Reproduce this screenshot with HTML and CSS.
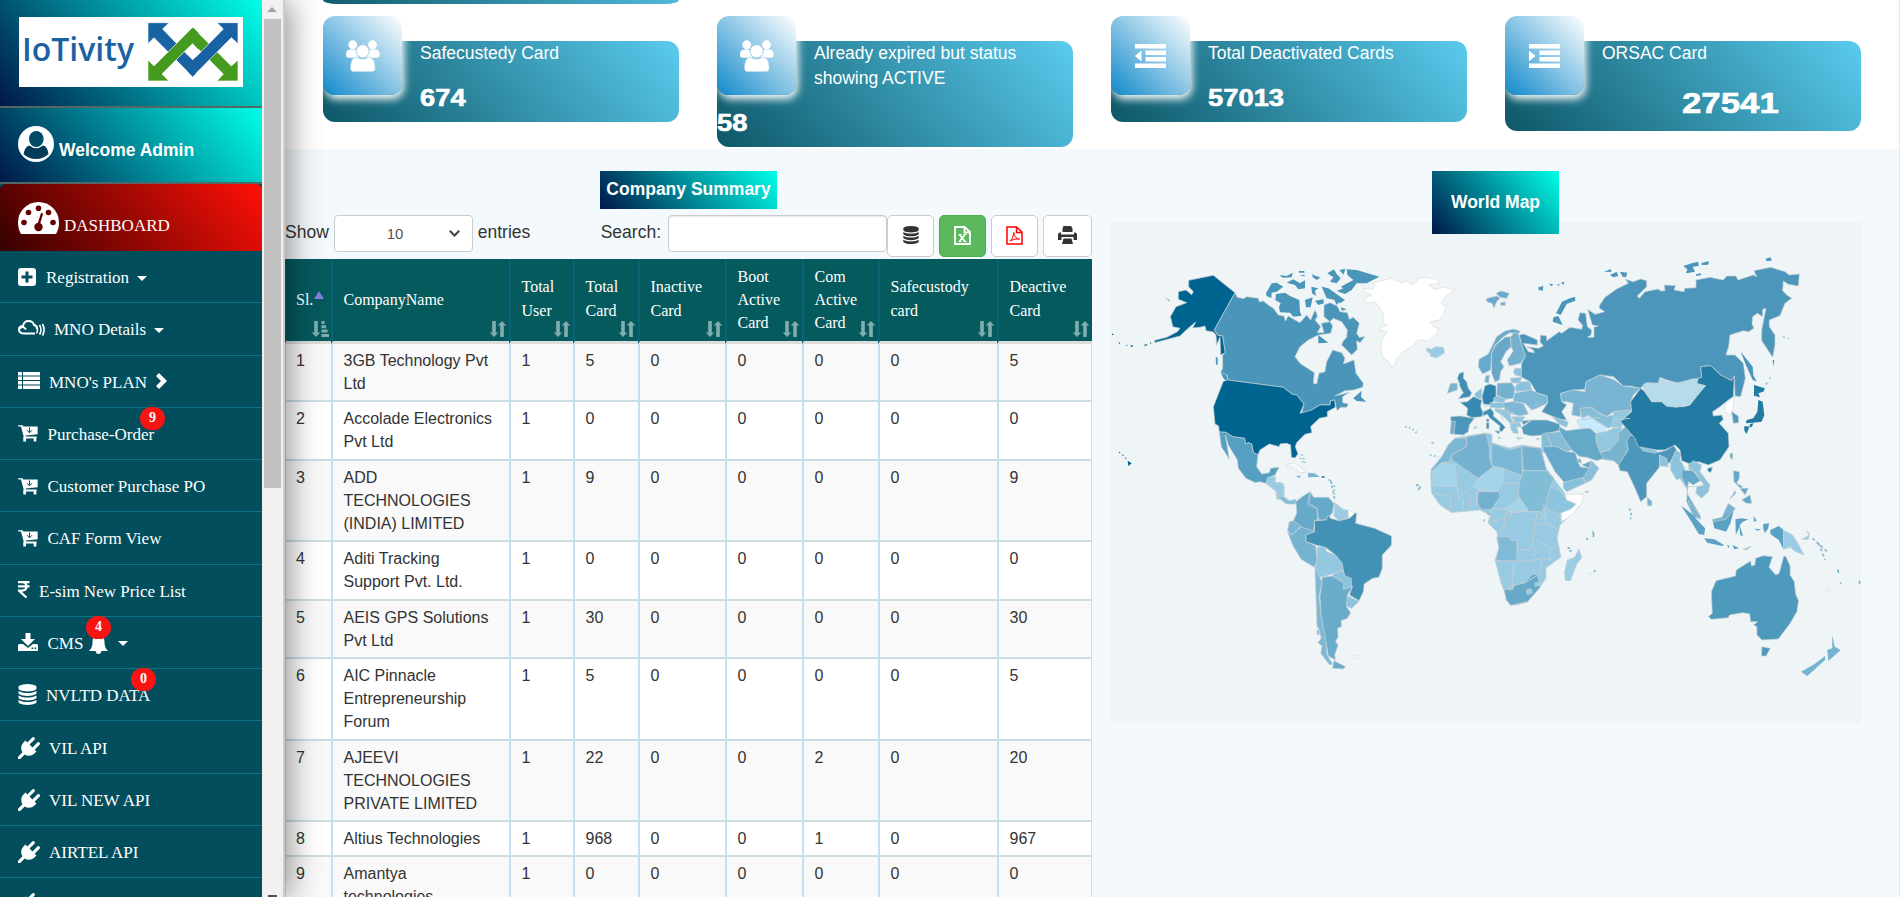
FILE: index.html
```html
<!DOCTYPE html>
<html lang="en">
<head>
<meta charset="utf-8">
<title>IoTivity Dashboard</title>
<link rel="stylesheet" href="styles.css">
</head>
<body>
<svg class="defs" width="0" height="0">
  <defs>
    <symbol id="plug" viewBox="0 0 1792 1792"><path d="M1755 453q37 38 37 90.5t-37 90.5l-401 400 150 150-160 160q-163 163-389.5 186.5t-411.5-100.5l-362 362h-181v-181l362-362q-124-185-100.5-411.5t186.5-389.5l160-160 150 150 400-401q38-37 91-37t90 37 37 90.5-37 90.5l-400 401 234 234 401-400q38-37 91-37t90 37z"/></symbol>
    <symbol id="database" viewBox="128 0 1536 1792"><path d="M896 768q237 0 443-43t325-127v170q0 69-103 128t-280 93.5-385 34.5-385-34.5-280-93.5-103-128v-170q119 84 325 127t443 43zm0 768q237 0 443-43t325-127v170q0 69-103 128t-280 93.5-385 34.5-385-34.5-280-93.5-103-128v-170q119 84 325 127t443 43zm0-384q237 0 443-43t325-127v170q0 69-103 128t-280 93.5-385 34.5-385-34.5-280-93.5-103-128v-170q119 84 325 127t443 43zm0-1152q208 0 385 34.5t280 93.5 103 128v128q0 69-103 128t-280 93.5-385 34.5-385-34.5-280-93.5-103-128v-128q0-69 103-128t280-93.5 385-34.5z"/></symbol>
    <symbol id="cart" viewBox="0 0 60 50"><path d="M0 0h14l2 4h43v23l-36 4v3h33v5h-1v10h-8v-9H24v9h-8v-9h-1l2-6L9 4H1z"/><path d="M34.500 7v14M27 15l7.500 8 7.500-8" fill="none" stroke="#024e5c" stroke-width="3"/></symbol>
    <symbol id="users" viewBox="0 0 100 94"><circle cx="20" cy="14" r="13"/><circle cx="78" cy="14" r="13"/><path d="M14 28h14q0 15 11 24H8q-8-1-8-9 0-15 14-15zM84 28H70q0 15-11 24h32q8-1 8-9 0-15-15-15z"/><circle cx="49" cy="33" r="19" stroke="#a5d2e8" stroke-width="2"/><path stroke="#a5d2e8" stroke-width="2" d="M29 50q20 12 40 0 17 4 17 34 0 9-9 9H22q-9 0-9-9 0-30 16-34z"/></symbol>
    <symbol id="sort" viewBox="0 0 16 16"><path d="M2.200 0h3.600v11.500h2.500L4 16-.2 11.500h2.400zM10.200 16h3.600V4.500h2.500L12 0 7.700 4.500h2.500z"/></symbol>
    <symbol id="sorted" viewBox="0 0 17 16"><path d="M2.200 0h3.600v11.500h2.500L4 16-.2 11.500h2.400zM9.500 0h3v3h-3zM9.500 4.300h4.500v3H9.500zM9.500 8.600h6v3h-6zM9.500 12.900H17V16H9.500z"/></symbol>
  </defs>
</svg>
<div class="page">
  <aside class="sidebar">
    <nav class="menu">
      <div class="brand">
        <svg width="224" height="70" viewBox="0 0 224 70">
          <rect width="224" height="70" fill="#fff"/>
          <text class="brand-name" x="3" y="43.500" textLength="112" lengthAdjust="spacingAndGlyphs">IoTivity</text>
          <g transform="translate(-19 -17) scale(.33333)" stroke="#fff" stroke-width="2">
            <path fill="#1962a3" d="M444 68h63l-19 19 90 94v49L462 113l-18 18z"/>
            <path fill="#449b1e" d="M578 82l116 116 20-18v63h-63l19-21-92-92z"/>
            <path fill="#449b1e" stroke="none" d="M560 100l18-18 18 18v49l-18-19-18 18z"/>
            <path fill="#449b1e" d="M444 243v-63l18 18L578 82v48l-92 92 21 21z"/>
            <path fill="#1962a3" d="M714 68h-63l19 19-92 94v49l116-117 20 18z"/>
            <path fill="#1962a3" stroke="none" d="M562 165l16 16 10-10v48l-10 11-16-17z"/>
            <path fill="#449b1e" stroke="none" d="M568 94l10-10 10 10v44l-10-9-10 9z"/>
          </g>
        </svg>
      </div>
      <div class="welcome">
        <svg width="36" height="36" viewBox="0 0 36 36"><circle cx="18" cy="18" r="18" fill="#fff"/><ellipse cx="18.300" cy="13" rx="7.300" ry="8" fill="#034a66"/><path d="M5.500 28Q7 20 11.500 19.500q6.500 5.500 13.500 0 4.500.5 5.500 8.500Q25.500 33 18 33T5.500 28z" fill="#033c5b"/></svg>
        <span>Welcome Admin</span>
      </div>
      <div class="dash">
        <svg width="41" height="33" viewBox="0 0 41 33"><path fill="#fff" d="M3 32Q0 27 0 20.500 0 12 6 6T20.500 0 35 6t6 14.500Q41 27 38 32z"/><g fill="#640000"><circle cx="6" cy="20.500" r="2.800"/><circle cx="10.500" cy="10.500" r="2.800"/><circle cx="20.500" cy="6.200" r="2.800"/><circle cx="30.500" cy="10.500" r="2.800"/><circle cx="35" cy="20.500" r="2.800"/><circle cx="20.500" cy="25" r="4.200"/><path d="M23 11l2.200.6-3.300 11-2.300-.6z"/></g></svg>
        <span>DASHBOARD</span>
      </div>
      <div class="item"><i class="ic w28"><svg width="18" height="18" viewBox="0 0 18 18"><path fill-rule="evenodd" d="M3 0h12q3 0 3 3v12q0 3-3 3H3q-3 0-3-3V3q0-3 3-3zM7.500 3.500v4h-4v3h4v4h3v-4h4v-3h-4v-4z"/></svg></i>Registration<b class="caret"></b></div>
      <div class="item"><i class="ic w36 up3"><svg width="27" height="16" viewBox="0 0 27 16"><g fill="none" stroke="#fff" stroke-width="2"><path d="M17 13.500H5.500Q1 13 1 9.500T5 6Q6 1 10.500 1T16 5q3 .5 3 4"/><path d="M1 9q4-4 7 .5" /><path d="M18.500 6.500q2 3 0 7M21.500 5q3 5 0 9.500M24.500 4q3.200 6 0 11.500" stroke-width="1.600"/></g></svg></i>MNO Details<b class="caret"></b></div>
      <div class="item"><i class="ic w31 up3"><svg width="22" height="17" viewBox="0 0 22 17"><path d="M0 0h4v3.400H0zM5 0h17v3.400H5zM0 4.500h4v3.400H0zM5 4.500h17v3.400H5zM0 9h4v3.400H0zM5 9h17v3.400H5zM0 13.500h4V17H0zM5 13.500h17V17H5z"/></svg></i>MNO's PLAN<svg class="chev" width="11" height="16" viewBox="0 0 11 16"><path d="M3 0l8 8-8 8-3-3 5-5-5-5z"/></svg></div>
      <div class="item"><i class="ic w30"><svg width="20" height="17"><use href="#cart"/></svg></i>Purchase-Order<em class="badge at140">9</em></div>
      <div class="item"><i class="ic w30"><svg width="20" height="17"><use href="#cart"/></svg></i>Customer Purchase PO</div>
      <div class="item"><i class="ic w30"><svg width="20" height="17"><use href="#cart"/></svg></i>CAF Form View</div>
      <div class="item"><i class="ic w21 up3"><svg width="12" height="17" viewBox="0 0 12 17"><path d="M0 1.200h11.500M0 5.400h11.500M0 1.200h4q4.500.3 4.500 4.200T4 9.600H1l7.500 7" fill="none" stroke="#fff" stroke-width="2.200"/></svg></i>E-sim New Price List</div>
      <div class="item"><i class="ic w30 up3"><svg width="20" height="18" viewBox="0 0 20 18"><path fill-rule="evenodd" d="M7.500 0h5v6H17l-7 7-7-7h4.500zM0 12.500q0-1.500 1.500-1.500H5l5 4 5-4h3.500q1.500 0 1.500 1.500V18H0zM13.500 14.500v1.600h1.600v-1.600zM16.500 14.500v1.600h1.600v-1.600z"/></svg></i>CMS<svg class="bell" width="19" height="20" viewBox="0 0 19 20"><path d="M9.500 0q6 1 6 8 0 6 3.500 9H0q3.500-3 3.500-9 0-7 6-8zM6.500 17h6q-.5 3-3 3t-3-3z"/></svg><b class="caret"></b><em class="badge at86">4</em></div>
      <div class="item"><i class="ic w28 up3"><svg width="19" height="21"><use href="#database"/></svg></i>NVLTD DATA<em class="badge at131">0</em></div>
      <div class="item"><i class="ic w31"><svg width="22" height="22"><use href="#plug"/></svg></i>VIL API</div>
      <div class="item"><i class="ic w31"><svg width="22" height="22"><use href="#plug"/></svg></i>VIL NEW API</div>
      <div class="item"><i class="ic w31"><svg width="22" height="22"><use href="#plug"/></svg></i>AIRTEL API</div>
      <div class="item"><i class="ic w31"><svg width="22" height="22"><use href="#plug"/></svg></i></div>
    </nav>
    <div class="scroll"><span class="up"></span><span class="thumb"></span><span class="down"></span></div>
  </aside>

  <main class="main">
    <section class="cards">
      <div class="stub"></div>
      <div class="cardrow">
        <article class="card"><div class="tile"><svg width="34" height="32"><use href="#users"/></svg></div><p class="ttl">Safecustedy Card</p><p class="num">674</p></article>
        <article class="card"><div class="tile"><svg width="34" height="32"><use href="#users"/></svg></div><p class="ttl">Already expired but status showing ACTIVE</p><p class="num flush">58</p></article>
        <article class="card"><div class="tile"><svg width="31" height="24" viewBox="0 0 31 24"><path d="M0 0h31v4.500H0zM10.500 6.500H31V11H10.500zM10.500 13H31v4.500H10.500zM0 19.500h31V24H0zM6.500 6.500v11L0 12z"/></svg></div><p class="ttl">Total Deactivated Cards</p><p class="num">57013</p></article>
        <article class="card"><div class="tile"><svg width="31" height="24" viewBox="0 0 31 24"><path d="M0 0h31v4.500H0zM10.500 6.500H31V11H10.500zM10.500 13H31v4.500H10.500zM0 19.500h31V24H0zM0 6.500v11L6.500 12z"/></svg></div><p class="ttl">ORSAC Card</p><p class="num big">27541</p></article>
      </div>
    </section>

    <section class="lower">
      <div class="left">
        <h3 class="label">Company Summary</h3>
        <div class="controls">
          <span>Show</span>
          <div class="select">10<svg width="11" height="7" viewBox="0 0 11 7"><path d="M.8.800l4.700 4.700L10.200.800" fill="none" stroke="#444" stroke-width="2"/></svg></div>
          <span>entries</span>
          <span class="search">Search:</span>
          <div class="input"></div>
          <div class="btns">
            <button><svg width="16" height="18"><use href="#database"/></svg></button>
            <button class="green"><svg width="17" height="19" viewBox="0 0 17 19"><path d="M1 1h9.500L16 6v12H1zM10.500 1v5.500H16" fill="none" stroke="#fff" stroke-width="1.800"/><path d="M5.500 8.500l5.500 7M11 8.500l-5.500 7" fill="none" stroke="#fff" stroke-width="1.700"/><path d="M4.500 8.500h3M9.500 8.500h3M4.500 15.500h3M9.500 15.500h3" fill="none" stroke="#fff" stroke-width="1.200"/></svg></button>
            <button><svg width="17" height="19" viewBox="0 0 17 19"><path d="M1 1h9.500L16 6v12H1zM10.500 1v5.500H16" fill="none" stroke="red" stroke-width="1.500"/><path d="M3.500 15.500q4-2.500 4.300-9 .8 6 5.700 6.500-5-.5-8.500 1.500" fill="none" stroke="red"/></svg></button>
            <button class="wide"><svg width="19" height="18" viewBox="0 0 19 18"><path d="M5.500 0H13l1.500 2.500V6h-10V2.500zM1.500 6.500H3v2h13v-2h1.500L19 8v6h-3.500v-3h-12v3H0V8zM5.500 12.500h8L15 18H4z"/></svg></button>
          </div>
        </div>
        <table>
          <colgroup><col class="c1"><col class="c2"><col class="c3"><col class="c4"><col class="c5"><col class="c6"><col class="c7"><col class="c8"><col class="c9"></colgroup>
          <thead><tr>
            <th>Sl.<b class="tri"></b><svg class="s1" width="17" height="16"><use href="#sorted"/></svg></th>
            <th>CompanyName<svg width="16" height="16"><use href="#sort"/></svg></th>
            <th class="two">Total<br>User<svg width="16" height="16"><use href="#sort"/></svg></th>
            <th class="two">Total<br>Card<svg width="16" height="16"><use href="#sort"/></svg></th>
            <th class="two">Inactive<br>Card<svg width="16" height="16"><use href="#sort"/></svg></th>
            <th>Boot<br>Active<br>Card<svg width="16" height="16"><use href="#sort"/></svg></th>
            <th>Com<br>Active<br>Card<svg width="16" height="16"><use href="#sort"/></svg></th>
            <th class="two">Safecustody<br>card<svg width="16" height="16"><use href="#sort"/></svg></th>
            <th class="two">Deactive<br>Card<svg width="16" height="16"><use href="#sort"/></svg></th>
          </tr></thead>
          <tbody>
            <tr class="h58"><td>1</td><td>3GB Technology Pvt Ltd</td><td>1</td><td>5</td><td>0</td><td>0</td><td>0</td><td>0</td><td>5</td></tr>
            <tr class="h59"><td>2</td><td>Accolade Electronics Pvt Ltd</td><td>1</td><td>0</td><td>0</td><td>0</td><td>0</td><td>0</td><td>0</td></tr>
            <tr class="h81"><td>3</td><td>ADD TECHNOLOGIES (INDIA) LIMITED</td><td>1</td><td>9</td><td>0</td><td>0</td><td>0</td><td>0</td><td>9</td></tr>
            <tr class="h59"><td>4</td><td>Aditi Tracking Support Pvt. Ltd.</td><td>1</td><td>0</td><td>0</td><td>0</td><td>0</td><td>0</td><td>0</td></tr>
            <tr class="h58"><td>5</td><td>AEIS GPS Solutions Pvt Ltd</td><td>1</td><td>30</td><td>0</td><td>0</td><td>0</td><td>0</td><td>30</td></tr>
            <tr class="h82"><td>6</td><td>AIC Pinnacle Entrepreneurship Forum</td><td>1</td><td>5</td><td>0</td><td>0</td><td>0</td><td>0</td><td>5</td></tr>
            <tr class="h81"><td>7</td><td>AJEEVI TECHNOLOGIES PRIVATE LIMITED</td><td>1</td><td>22</td><td>0</td><td>0</td><td>2</td><td>0</td><td>20</td></tr>
            <tr class="h35"><td>8</td><td>Altius Technologies</td><td>1</td><td>968</td><td>0</td><td>0</td><td>1</td><td>0</td><td>967</td></tr>
            <tr class="h58"><td>9</td><td>Amantya technologies</td><td>1</td><td>0</td><td>0</td><td>0</td><td>0</td><td>0</td><td>0</td></tr>
          </tbody>
        </table>
      </div>

      <div class="right">
        <h3 class="label tall">World Map</h3>
        <svg class="map" width="750" height="501" viewBox="1111 222 750 501">
          <!-- North America and Greenland -->
          <g transform="translate(1100 220) scale(.33333)" fill="#4a96ba">
            <path fill="#006491" d="M266 181L340 166 405 218 343 330 354 346 368 347 376 398 362 405 360 350 350 375 348 345 340 336 318 332 315 318 300 322 278 324 287 306 270 320 250 338 240 348 164 368 164 361 200 352 232 335 240 325 218 320 215 305 211 290 228 260 260 248 235 238 235 215 258 210 275 224 280 215 266 200zM197 233l11 7 1 5z"/>
            <path class="isle" fill="#006491" d="M36 341h4v4h-4zM55 366l6 4-3 3zM77 374l6 2-2 3zM92 376h6v4h-6zM134 373l10 1-10 5zM150 367l5 2-4 3zM56 694l6 5-4 1zM66 702l6 5-4 1zM74 711l6 5-4 1zM83 722l12 8-10 8z"/>
            <path d="M405 218L412 232 430 236 440 230 475 235 478 246 490 243 505 255 520 265 535 285 552 288 556 303 565 288 585 300 600 308 620 285 632 300 645 270 650 280 652 290 645 300 662 320 652 338 672 338 664 310 690 305 698 318 692 340 655 345 625 360 600 380 585 410 600 430 643 458 640 490 650 492 657 460 675 455 680 425 698 390 725 398 735 415 730 432 762 420 768 460 790 490 788 502 760 510 735 512 705 528 748 517 728 530 728 548 745 552 740 562 722 562 712 572 708 560 704 540 692 542 690 555 660 555 635 570 605 580 612 552 590 525 575 522 550 502 383 480 382 466 362 456 368 445 368 405 376 398 368 347 354 346 343 330z"/>
            <path d="M672 255L690 248 712 258 720 275 742 278 748 298 760 292 778 310 770 340 778 352 795 350 780 368 770 362 772 388 755 405 725 375 728 365 740 352 742 330 725 305 700 295 690 305 672 290z"/>
            <path class="isle" d="M528 222L555 218 570 228 598 240 600 275 605 287 580 290 570 278 540 277 537 262 542 250 526 240zM498 220L515 190 530 188 550 200 530 215 515 218 514 234 500 228zM740 148L770 150 838 170 800 190 770 190 755 210 735 222 710 213 730 205 722 200 742 190 760 180 742 165zM538 165L560 168 578 158 575 172 548 173zM560 188L580 178 600 190 615 180 615 205 595 208 585 195zM597 153h16v5h-16zM598 167l15-3 1 5zM637 162l10 6 14 4-10 8-13-8zM682 160L702 148 710 162 722 175 710 190 690 185 700 172zM718 150l18-4-5 18zM665 200L685 205 700 215 735 240 720 250 705 240 680 235zM615 240L638 232 632 262 618 262zM645 242L670 238 672 250 655 255zM634 200L655 205 645 212 648 228 636 220zM655 345L685 368 655 370zM760 535L785 512 783 530 798 545 770 543zM362 456L380 466 383 485 370 475zM347 412h6v22h-5zM722 262l18 6-14 4zM700 235l20 8-10 12z"/>
            <path fill="#006491" d="M370 484L383 480 550 502 575 522 590 525 612 552 600 580 635 570 660 555 690 555 692 542 704 540 706 562 682 575 682 590 658 595 632 620 636 638 615 643 590 668 586 680 594 702 585 714 574 712 572 675 560 670 540 672 538 680 508 672 480 690 474 704 460 698 455 672 445 668 436 672 434 655 398 650 378 637 358 636 356 618 345 612 340 560z"/>
            <path fill="#559fc2" d="M358 636L378 637 398 650 434 655 436 672 445 668 455 672 460 698 474 704 470 740 485 762 508 758 512 745 537 742 525 765 508 772 498 790 478 785 466 788 438 775 415 745 412 720 385 675 376 645 388 718 364 680z"/>
            <path fill="#9acbe4" d="M508 772L522 770 520 788 545 788 553 800 550 838 530 838 528 815 498 790zM980 384L995 388 1005 380 1030 382 1034 398 1010 414 990 408 992 400 980 395z"/>
            <path class="blank" d="M845 183L870 175 905 188 920 182 935 195 952 185 948 178 975 172 1010 178 1018 190 985 195 1005 208 1030 202 1065 208 1032 235 1024 250 1038 262 1030 285 1018 300 990 305 1000 320 1015 325 1012 340 985 362 955 360 935 380 910 395 890 415 882 440 872 440 868 425 850 415 842 385 845 360 862 335 840 330 842 322 862 315 850 310 850 280 828 248 800 248 792 235 815 225 792 215 792 205 818 208 825 195 818 188z"/>
            <path class="blank" d="M556 738L575 730 600 742 620 758 600 758 575 742z"/>
            <path class="isle" fill="#7fb9d7" d="M590 769h12l-4 5zM624 758L640 760 655 770 625 772z"/>
            <path class="isle" fill="#006491" d="M665 769h9v4h-9z"/>
            <g class="dots" fill="none" stroke-dasharray="1.500 2.500"><path d="M686 778L704 800 702 835M605 703L620 736M600 714L612 730M915 620L935 625 952 640M948 795L962 805M990 705L1015 710"/></g>
          </g>
          <!-- Europe and Asia -->
          <g transform="translate(1400 220) scale(.33333)" fill="#4b96ba">
            <path d="M358 345L372 342 412 360 412 375 370 370 385 395 403 398 400 390 380 380 415 385 430 378 420 365 422 345 440 348 440 362 478 335 485 340 510 322 545 328 548 316 534 300 540 278 557 280 562 320 575 330 573 345 563 352 582 352 582 322 595 318 577 315 563 268 585 283 614 275 598 265 598 257 615 232 650 207 685 190 676 178 700 185 722 177 740 182 740 200 712 228 718 235 735 215 775 207 782 213 795 212 793 195 827 197 822 210 852 215 854 205 888 203 888 180 930 172 970 180 980 168 1008 168 1014 180 1060 165 1070 170 1062 152 1112 142 1155 155 1168 165 1198 162 1195 198 1165 193 1150 183 1148 212 1160 225 1175 235 1155 250 1140 287 1108 300 1108 320 1125 345 1125 375 1118 412 1085 362 1085 330 1098 265 1088 268 1088 290 1072 280 1058 290 1056 312 1062 325 1045 335 1030 332 990 345 986 380 978 405 1005 405 1030 430 1036 475 1022 530 1005 528 1003 468 995 482 962 465 932 437 902 440 905 472 860 485 835 490 800 480 780 472 775 490 735 490 722 505 690 498 670 498 640 470 600 465 558 485 555 508 520 510 482 520 485 545 500 555 485 575 500 600 480 598 455 588 425 575 442 550 442 528 410 518 390 485 362 470 365 430 376 408 365 375z"/>
            <path class="isle" d="M525 230L526 242 500 252 482 285 468 280 486 245 510 235zM460 292L475 288 488 315 458 305zM1022 395L1058 440 1060 465 1070 485 1058 480 1040 440zM415 202L430 198 428 212 416 210zM447 191l13 2-6 6zM470 194l10-1-4 5zM483 188l10-3-2 10zM612 156L632 147 635 155zM630 165L650 155 655 168 640 172zM660 155L682 158 678 172 668 170zM850 138L875 130 895 125 896 138 878 140 885 155 858 160 862 148zM905 128L927 124 925 134 905 135zM888 163l14-3 2 5-15 3zM1097 116L1112 112 1115 122 1100 124zM1118 420h5l-3 20zM1148 349l8 2-4 3zM1162 353l6 2-3 2zM1096 492l7-6-3 8zM1107 476l6-5-3 7z"/>
            <path fill="#68aacb" d="M258 236L290 228 300 235 290 245 282 264 276 250 262 246zM288 220L302 213 328 220 320 235 300 232zM300 250L315 245 316 256 303 256zM315 333L340 327 360 333 355 342 330 338 310 350 285 375 275 400 272 450 248 462 235 440 237 418 265 402 290 350z"/>
            <path fill="#67a8c9" d="M315 352L332 350 333 380 318 395 302 425 312 440 302 455 298 480 285 486 275 460 275 400 287 375z"/>
            <path fill="#75b1cf" d="M332 350L345 336 355 342 376 408 362 430 328 438 322 420 340 392 333 380z"/>
            <path fill="#418eb4" d="M178 460L192 456 190 475 200 485 205 505 215 518 210 530 175 536 190 518 180 500 178 490 172 475z"/>
            <path fill="#78b3d0" d="M152 490L172 490 172 510 142 520 148 500z"/>
            <path fill="#3689b0" d="M180 547L202 545 220 530 245 540 242 560 250 580 245 590 215 593 200 585 203 565z"/>
            <path fill="#4b96ba" d="M152 590L180 588 223 595 208 615 205 635 190 645 163 643 153 605z"/>
            <path fill="#6eafcd" d="M154 604L166 604 162 643 150 641z"/>
            <path fill="#2f84ad" d="M255 497L270 492 288 498 288 535 270 555 250 552 246 530z"/>
            <path fill="#3f8fb5" d="M250 575L272 565 282 578 280 588 305 610 316 622 305 635 298 632 300 618 270 595 262 583 248 588zM284 632L300 634 296 642zM259 597h8v8h-7zM259 608h8v18h-8z"/>
            <path fill="#73b1ce" d="M292 490L335 488 345 505 340 535 318 538 290 525zM258 467L268 465 266 490 253 485z"/>
            <path fill="#8bc3de" d="M225 520L245 505 246 530 240 540 225 530zM280 535L292 528 318 538 310 548 285 545zM270 548L310 548 325 560 300 565 270 562zM345 445L362 445 365 470 345 465 340 455zM330 475L365 472 358 490 335 488zM345 500L358 485 390 485 395 510 348 515z"/>
            <path fill="#7db8d5" d="M342 520L395 510 412 520 442 528 442 550 410 565 395 570 375 550 340 545zM310 548L340 545 370 550 385 582 360 588 330 580 315 570z"/>
            <path fill="#92c7df" d="M285 565L315 570 330 580 335 600 345 610 330 610 312 590 285 572zM335 590L375 590 365 605 345 610zM330 610L360 608 365 622 350 620 355 640 340 640 332 625zM350 652l18 3-15 3zM295 652h6v4h-6zM408 655h12l-8 5zM222 620h7v5h-7zM95 666h6v5h-6z"/>
            <path d="M365 622L380 612 395 600 440 600 478 612 483 630 430 645 395 648 370 642zM365 603L395 600 370 615z" fill="#559dbf"/>
            <path fill="#79b5d3" d="M482 520L520 510 555 515 558 485 600 465 640 478 670 498 722 505 700 525 692 545 695 570 640 575 620 590 600 580 575 562 545 565 540 590 515 585 520 550 500 545 485 545z"/>
            <path fill="#87bfda" d="M540 565L575 562 600 582 620 590 635 585 660 600 625 625 570 590 545 595zM455 588L480 598 505 605 500 622 478 612z"/>
            <path fill="#c8ecff" d="M530 602L565 586 590 605 620 622 605 640 570 625 542 625z"/>
            <path fill="#93c8e1" d="M640 575L695 570 670 600 665 622 630 622 640 600zM588 640L620 634 640 625 665 622 655 660 630 690 600 697 588 665z"/>
            <path fill="#78b3d0" d="M600 697L630 690 655 660 655 640 675 620 692 630 695 645 680 665 685 690 655 735 640 722 605 718z"/>
            <path fill="#65a9c9" d="M478 620L500 632 530 628 570 625 588 640 588 665 600 697 612 715 590 722 560 712 540 710 515 690 490 655 480 640z"/>
            <path fill="#84bdd8" d="M430 640L480 635 490 655 515 690 500 695 470 680 440 700 425 695 425 650z"/>
            <path fill="#66a9ca" d="M430 680L470 680 500 695 525 697 540 740 568 745 560 770 545 775 495 790 465 755 430 690zM535 718L540 715 545 730 535 725zM545 735L575 722 568 745z"/>
            <path fill="#88c0da" d="M568 745L575 722 597 745 575 780 555 790 550 772zM490 787L550 772 555 790 500 815 490 805zM553 815l15-2-6 6zM742 835L755 845 755 858 743 857z"/>
            <path fill="#4c97bb" d="M655 735L685 690 680 665 690 645 708 650 715 675 735 690 775 697 800 690 820 675 830 690 810 728 795 735 780 705 778 742 740 790 740 830 722 845 705 805 682 755 660 752z"/>
            <path fill="#8cc4de" d="M720 680L745 683 775 695 765 700 728 692zM778 705L800 715 805 740 780 738zM812 728L828 690 842 700 840 720 855 745 845 765 855 800 840 775 830 780 812 750z"/>
            <path fill="#237ba3" d="M722 505L732 512 755 545 785 545 800 558 850 560 870 555 915 497 890 490 895 475 905 472 902 440 932 437 962 465 995 482 1003 468 1000 530 985 540 975 548 960 560 938 575 940 588 965 585 970 598 958 610 985 640 987 680 960 720 925 735 895 725 870 732 845 722 840 690 825 675 795 690 770 690 715 680 705 655 662 605 695 575 692 545zM923 745L938 742 932 758 923 752z"/>
            <path fill="#b6dbed" d="M728 500L740 488 775 490 780 472 800 485 835 488 880 476 893 478 890 492 917 497 870 552 830 562 800 558 785 545 755 545z"/>
            <path class="blank" d="M975 552L1002 530 1000 560 992 585 978 578z"/>
            <path fill="#509abd" d="M995 575L1015 588 1016 608 1000 610z"/>
            <path class="isle" fill="#237ba3" d="M1062 495L1095 505 1090 515 1075 520 1080 532 1062 527zM1075 540L1088 545 1093 585 1085 605 1060 608 1038 610 1040 600 1060 595 1072 575zM1033 618L1048 620 1040 642 1033 632zM1050 612l10-2-4 10-8 2z"/>
            <path fill="#63a8c9" d="M845 750L880 752 905 780 880 795 865 785 862 820 870 835 900 885 902 898 880 890 860 845 862 810 845 770zM1000 752L1018 755 1018 775 1010 790 1028 800 1022 805 1002 785zM1005 812L1008 818 990 838zM1020 805h25l-10 20zM1025 840L1050 825 1055 850 1040 850zM990 700h8v20l-8-8z"/>
            <path fill="#8dc4dd" d="M865 735L880 722 905 735 900 755 930 795 925 815 905 835 888 820 890 800 912 795 885 755 868 750z"/>
            <g fill="none"><path d="M870 740L885 760 912 795M545 600L600 592M640 600L690 595M320 565L340 580 345 610M300 575L310 600M370 550L380 570M405 555h10M442 645L455 680M640 620L650 605M250 560L265 555M860 800L890 800"/></g>
          </g>
          <!-- Africa -->
          <path fill="#98cbe3" d="M1455 438L1467 436 1486 433 1492 435 1492 443 1510 448 1522 445 1541 448 1546 468 1560 487 1566 495 1583 494 1579 507 1560 525 1557 538 1561 557 1546 568 1546 578 1540 587 1527.500 602 1516 605 1510.500 605 1506 600 1506 595 1501 583 1495 560 1499 548 1497 532 1488 523 1490 515 1480 510 1469 511 1451.500 512.500 1440 505 1431.500 493 1430.700 472 1442 457 1448 445z"/>
          <g transform="translate(1400 220) scale(.33333)">
            <path fill="#7cb8d5" d="M165 655L200 655 200 680 155 705 150 725 125 728 95 755 92 750 125 710 145 675zM275 668L330 690 365 680 368 768 310 745 275 738z"/>
            <path fill="#74b1d0" d="M200 650L258 640 268 670 268 715 278 742 235 775 155 720 155 705 200 680zM365 678L422 685 440 752 370 752zM235 815L298 815 300 830 275 868 245 870 232 850z"/>
            <path fill="#8ec6df" d="M258 640L275 643 275 675 268 680z"/>
            <path fill="#82bdd8" d="M370 752L440 752 462 775 452 800 440 850 420 880 380 872 355 825 358 790z"/>
            <path fill="#8dc5de" d="M452 800L480 812 495 832 530 855 510 872 480 885 440 865 440 835z"/>
            <path fill="#a4d4ea" d="M95 755L125 728 165 735 172 800 100 800zM235 775L280 740 312 748 310 790 290 815 235 812 220 800zM310 868L340 850 355 830 385 870 345 878z"/>
            <path class="blank" d="M495 822L550 823 545 850 515 885 485 905 482 880 512 868 530 852 500 840z"/>
            <g fill="none"><path d="M172 800L175 835 220 800M100 820L150 828 152 875M190 835V868M210 825L212 865M230 815V855M270 900L275 865 310 868M330 900L335 875 420 875 440 900M310 790L355 790M440 880L420 900"/></g>
          </g>
          <g transform="translate(1200 460) scale(.42092 .33333)">
            <path fill="#7fbbd7" d="M705 230L735 230 738 240 753 242 753 305 702 303 710 265z"/>
            <path fill="#67a9c9" d="M722 388L742 390 748 375 772 368 790 342 802 345 808 382 778 425 738 436 728 420z"/>
            <path fill="#9acce3" d="M900 267L907 293 895 312 880 362 868 362 866 335 873 300 890 292zM775 390L786 386 790 398 778 405zM796 368h10v10h-10z"/>
            <g fill="none"><path d="M700 302L760 303 778 305 812 295M745 310L742 390M745 345L750 312M772 368L745 375M772 368L810 340 810 300M753 242L755 268 785 270 795 215 795 190 803 155M820 160L822 190 800 195M822 190L852 210M800 240L830 265 855 262M830 265L832 300 812 295M790 250L800 280 785 285M705 220L722 200 725 160 760 155 803 155M685 190L718 175M820 155L815 130M860 155L855 190"/></g>
            <path class="isle" fill="#7ab6d3" d="M873 262h6v5h-6zM878 270h5v5h-5zM932 210l5 10v12h-4zM917 234h5v5h-5zM935 330h6l-4 9zM672 180l5-3-2 8zM683 158h5v6h-5z"/>
            <path class="dots" fill="none" d="M1021 145v8M1024 158v8M1023 172v6M514 73l6 5M524 80l-6 10"/>
          </g>
          <!-- South America, Oceania and South-East Asia -->
          <g transform="translate(1200 460) scale(.42092 .33333)">
            <path fill="#9acbe4" d="M160 52L180 50 178 68 198 70 200 105 190 110 180 90 158 72z"/>
            <path fill="#84bdd8" d="M182 108L200 110 212 122 228 118 228 132 205 132z"/>
            <path fill="#67a9c9" d="M262 95L260 130 278 145 280 178 272 182 270 215 240 205 222 182 230 158 228 125 245 108zM262 95L270 112 305 112 318 130 315 158 300 180 282 180 278 145 255 135z"/>
            <path fill="#9acde5" d="M320 128L340 148 355 152 355 172 330 182 318 168z"/>
            <path class="blank" d="M353 148L366 160 360 174 352 170z"/>
            <path fill="#7ab6d3" d="M212 185L222 182 240 198 218 225 208 212z"/>
            <path fill="#76b3d0" d="M208 215L218 225 240 200 272 215 252 225 252 245 275 258 278 300 272 322 240 298 220 255z"/>
            <path fill="#93c8e1" d="M278 262L298 258 300 275 322 285 338 305 340 332 318 340 290 352 280 345 273 322 278 300z"/>
            <path fill="#4392b6" d="M305 165L310 175 330 182 355 175 368 160 372 158 370 190 415 205 455 228 455 255 433 285 433 325 425 352 410 355 390 372 388 395 378 422 355 405 362 380 342 345 338 310 322 285 298 262 275 255 252 245 252 225 272 215 272 182 300 180z"/>
            <path fill="#8cc4dd" d="M318 340L340 332 345 348 360 355 360 385 340 388 342 370 315 348zM350 408L378 424 360 445 348 438z"/>
            <path fill="#7db9d5" d="M273 322L285 352 290 365 283 410 288 470 298 520 302 585 315 612 308 615 287 580 290 558 280 548 288 535 282 505 278 500zM278 510h5v14h-5z"/>
            <path fill="#6aacca" d="M290 352L315 348 342 370 340 388 362 382 350 405 348 440 358 458 350 475 335 482 336 500 327 505 328 530 322 545 328 555 320 585 322 600 305 588 296 520 288 470 285 410 290 365zM318 602L346 620 340 627 315 625z"/>
            <path class="blank" d="M357 588h9v6h-9zM368 586h8v9h-8zM923 338h6v5h-6zM1488 382L1503 400 1497 402zM205 12L225 10 250 35 240 38 225 20z"/>
            <path fill="#4e9abd" d="M1215 395L1226 362 1272 348 1274 330 1308 303 1310 318 1318 315 1320 295 1338 287 1360 290 1352 322 1368 345 1376 340 1387 288 1392 290 1402 318 1402 345 1412 365 1415 402 1422 422 1418 455 1402 490 1374 537 1335 540 1323 525 1323 500 1315 495 1325 485 1308 485 1306 462 1290 458 1258 465 1255 473 1215 478 1208 470 1217 460zM1335 560L1355 565 1345 588 1334 588z"/>
            <path class="isle" fill="#76b3d2" d="M1502 525L1508 560 1522 570 1493 603 1490 570 1502 565zM1485 588L1485 600 1443 648 1428 635 1460 612zM1513 328l5 1 1 11-4-2zM1520 367h4v4h-4zM1565 362h4v10h-4z"/>
            <path class="isle" fill="#5aa1c3" d="M1143 137L1165 158 1200 205 1198 225 1185 222 1165 180zM1198 235L1222 238 1245 255 1240 258 1205 248zM1217 178L1240 175 1255 145 1268 152 1260 190 1250 215 1222 205zM1272 178L1285 175 1303 178 1290 185 1282 195 1290 228 1283 225 1282 200 1273 225zM1315 168L1323 182 1316 185zM1338 192L1352 190 1350 205 1342 220 1338 205zM1317 206L1333 208 1325 212zM1355 210L1375 198 1386 210 1386 268 1375 240 1355 222zM1252 255l6 2-2 8zM1265 255l16 10-12 3z"/>
            <path fill="#9acde5" d="M1386 210L1408 225 1420 248 1435 285 1415 275 1402 262 1386 268zM1430 238L1448 225 1445 238zM1440 212l8 8v6zM1290 268L1310 258 1300 270z"/>
            <path fill="#76b3d0" d="M1218 178L1240 172 1255 130 1272 145 1250 178 1220 185zM1160 120L1172 140 1190 172 1185 175 1165 150zM1063 112L1074 125 1072 138 1063 135z"/>
            <path class="dots" fill="none" stroke-dasharray="3 2.500" d="M1455 235L1490 275M1470 250L1485 300M310 60L320 115"/>
            <path class="isle" fill="#7ab6d3" d="M228 47h12l-5 6zM258 40L272 40 285 50 258 52z"/>
          </g>
        </svg>
      </div>
    </section>
  </main>
</div>
</body>
</html>
```
FILE: styles.css
```css
* { box-sizing: border-box; }
body {
  margin: 0;
  height: 897px;
  overflow: hidden;
  font-family: "Liberation Sans", Arial, sans-serif;
  font-size: 17.5px;
  color: #333;
  background: #f3f9fc;
}
.defs { display: block; height: 0; }
.page { display: flex; height: 897px; overflow: hidden; }

/* sidebar */
.sidebar {
  flex: none;
  width: 285px;
  height: 897px;
  display: flex;
  position: relative;
  z-index: 5;
  background: #024e5c;
  border-right: 2px solid #ccc;
  box-shadow: 4px 0 30px rgba(0, 0, 0, .45);
}
.menu {
  width: 262px;
  height: 897px;
  overflow: hidden;
  color: #fff;
  font-family: "Liberation Serif", "Times New Roman", serif;
  font-size: 17px;
}
.brand, .welcome { background: linear-gradient(50deg, #001848, #00fee8); border-bottom: 2px solid #536767; }
.brand { height: 108px; padding: 17px 0 0 19px; }
.brand svg { display: block; }
.brand-name { font: 600 33px "Open Sans", sans-serif; fill: #1b62a3; }
.welcome {
  height: 76px;
  display: flex;
  align-items: flex-start;
  gap: 5px;
  padding: 18px 0 0 18px;
  font: bold 17.5px "Liberation Sans", Arial, sans-serif;
}
.welcome span { padding-top: 14px; }
.dash {
  height: 67px;
  display: flex;
  align-items: flex-start;
  gap: 5px;
  padding: 18px 0 0 18px;
  border-radius: 6px 6px 0 0;
  background: linear-gradient(50deg, #340000, #ff1007);
}
.dash span { padding-top: 14px; }
.item {
  height: 52.27px;
  display: flex;
  align-items: center;
  position: relative;
  padding: 3px 0 0 18px;
  border-bottom: 1px solid #0a7388;
  white-space: pre;
}
.ic { flex: none; display: flex; height: 24px; align-items: center; padding-bottom: 2px; }
.up3 { padding-bottom: 4px; }
.ic svg, .chev, .bell { fill: #fff; display: block; }
.w21 { width: 21px; }
.w28 { width: 28px; }
.w30 { width: 29.5px; }
.w31 { width: 31px; }
.w36 { width: 36px; }
.caret {
  margin-left: 8px;
  border: 5px solid transparent;
  border-top-color: #fff;
  border-bottom: 0;
}
.chev { margin: 0 0 3px 9px; }
.bell { margin-left: 6px; }
.bell + .caret { margin-left: 10px; }
.badge {
  position: absolute;
  top: -1px;
  width: 25px;
  height: 23px;
  line-height: 22px;
  border-radius: 12px;
  background: #f91414;
  font-size: 14px;
  font-style: normal;
  font-weight: bold;
  text-align: center;
}
.at140 { left: 140px; }
.at86 { left: 86px; }
.at131 { left: 131px; }
.scroll {
  width: 21px;
  background: #f1f1f1;
  display: flex;
  flex-direction: column;
  align-items: center;
  padding: 7px 1px 0 0;
}
.up { border: 5px solid transparent; border-bottom-color: #a3a3a3; border-top: 0; }
.thumb { width: 17px; height: 470px; margin: 7px 0 0 1px; background: #c1c1c1; }
.down { width: 9px; height: 2px; margin-top: 407px; background: #505050; }

/* summary cards */
.main { flex: 1; min-width: 0; border-right: 1px solid #e4e9ed; }
.cards { height: 149px; background: #fff; padding-left: 38px; }
.stub {
  width: 356px;
  height: 4px;
  border-radius: 0 0 14px 14px / 0 0 4px 4px;
  background: linear-gradient(90deg, #115d6d, #4fb9da);
}
.cardrow {
  display: grid;
  grid-template-columns: repeat(4, 356px);
  gap: 38px;
  align-items: start;
  padding-top: 37px;
}
.card {
  position: relative;
  padding-bottom: 7px;
  border-radius: 12px;
  color: #fff;
  background: linear-gradient(50deg, #0d5767, #5acbee);
}
.tile {
  position: absolute;
  left: 0;
  top: -25px;
  width: 79px;
  height: 79px;
  display: flex;
  align-items: center;
  justify-content: center;
  border-radius: 12px;
  background: linear-gradient(45deg, #1089ca, #fff);
  box-shadow: 2px 4px 8px #fff;
}
.tile svg { fill: #fff; }
.card p { margin: 0; }
.ttl { padding-left: 97px; width: 340px; line-height: 25px; }
.card .num {
  width: 120px;
  margin: 15px 0 0 97px;
  font-size: 24px;
  line-height: 34px;
  font-weight: bold;
  transform: scaleX(1.14);
  transform-origin: left;
  -webkit-text-stroke: .6px #fff;
}
.card .flush { margin-left: 0; }
.card .big { margin-left: 177px; font-size: 30px; line-height: 43px; transform: scaleX(1.16); }

/* lower area */
.lower { display: grid; grid-template-columns: 807px 750px; gap: 19px; padding-top: 22px; }
.label {
  width: 177px;
  height: 38px;
  margin: 0 auto;
  text-align: center;
  font-size: 17.5px;
  line-height: 36px;
  color: #fff;
  background: linear-gradient(50deg, #001848, #00fee8);
}
.tall { position: relative; z-index: 1; width: 127px; height: 63px; line-height: 62px; margin-left: 321px; }
.map { display: block; margin-top: -12px; background: #eff5f7; }
.map path { stroke: #c4ced2; stroke-width: .7px; stroke-linejoin: round; vector-effect: non-scaling-stroke; }
.map g g path, .map path[fill="none"] { stroke-width: .9px; }
.map path.isle { stroke: none; }
.map .dots path, .map path.dots { stroke: #8fbdd3; stroke-width: 1.8px; }
.map .blank { fill: #fff; stroke: #ddd; }
.controls { height: 50px; display: flex; align-items: flex-start; padding: 6px 0 0; }
.controls span { line-height: 34px; }
.select {
  width: 139px;
  height: 37px;
  margin: 0 5px 0 5px;
  padding: 0 12px 0 52px;
  border: 1px solid #ccc;
  border-radius: 4px;
  background: #fff;
  display: flex;
  align-items: center;
  justify-content: space-between;
  font-size: 15px;
  color: #555;
}
.search { margin-left: auto; }
.input {
  width: 219px;
  height: 37px;
  margin-left: 7px;
  border: 1px solid #ccc;
  border-radius: 4px;
  background: #fff;
  box-shadow: inset 0 1px 1px rgba(0, 0, 0, .08);
}
.btns { display: flex; gap: 5px; }
.btns button {
  width: 47px;
  height: 42px;
  padding: 0 0 2px;
  display: flex;
  align-items: center;
  justify-content: center;
  border: 1px solid #ccc;
  border-radius: 5px;
  background: #fff;
  fill: #333;
}
.btns .green { background: #5cb85c; border-color: #4cae4c; }
.btns .wide { width: 49px; }

/* table */
table {
  width: 807px;
  table-layout: fixed;
  border-collapse: separate;
  border-spacing: 0;
  font-size: 16px;
}
.c1 { width: 46px; }
.c2 { width: 178px; }
.c3 { width: 64px; }
.c4 { width: 65px; }
.c5 { width: 87px; }
.c6 { width: 77px; }
.c7 { width: 76px; }
.c8 { width: 119px; }
.c9 { width: 95px; }
th {
  position: relative;
  height: 85px;
  padding: 0 0 2px 10.5px;
  border-left: 2px solid #056478;
  border-bottom: 3px solid #ddd;
  background: #055a5e;
  color: #fff;
  font: 16px/23px "Liberation Serif", "Times New Roman", serif;
  text-align: left;
  vertical-align: middle;
}
th.two { line-height: 24px; }
th svg { position: absolute; right: 3px; bottom: 4px; fill: #fff; opacity: .5; }
th .s1 { right: 2px; }
.tri {
  position: absolute;
  left: 28px;
  top: 32px;
  border: 5px solid transparent;
  border-bottom: 8px solid #8080dd;
  border-top: 0;
}
td {
  padding: 5px 16px 0 10.5px;
  border-left: 2px solid #c5e0ef;
  border-bottom: 2px solid #cddde6;
  line-height: 23px;
  vertical-align: top;
  background: #fff;
}
td:first-child, th:first-child { border-left-width: 1px; padding-left: 10px; }
td:last-child { border-right: 1px solid #c5e0ef; }
tbody tr:nth-child(odd) td { background: #f9f9f9; }
.h35 td { height: 35px; }
.h58 td { height: 58px; }
.h59 td { height: 59px; }
.h81 td { height: 81px; }
.h82 td { height: 82px; }
```
